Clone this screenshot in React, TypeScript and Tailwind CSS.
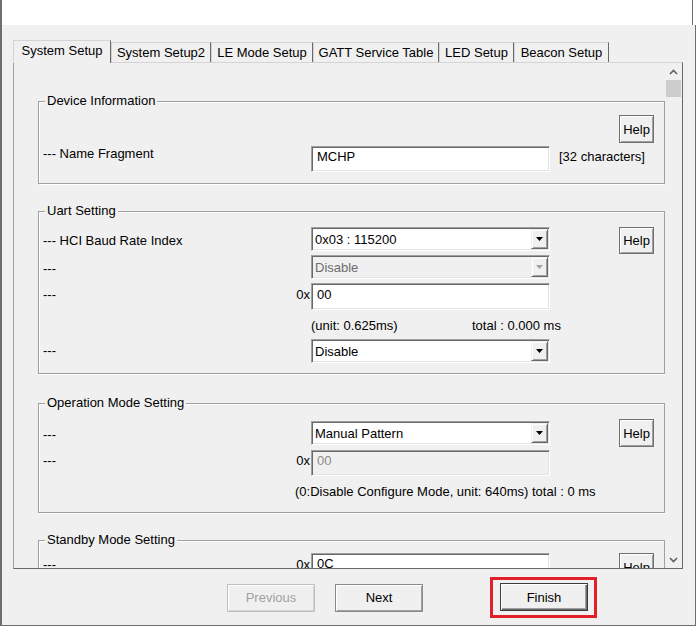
import React from 'react';

const sunkenWhite =
  "bg-white border border-t-[#a0a0a0] border-l-[#a0a0a0] border-r-white border-b-white shadow-[inset_1px_1px_0_#696969,inset_-1px_-1px_0_#e3e3e3]";
const sunkenGray =
  "bg-[#f0f0f0] border border-t-[#a0a0a0] border-l-[#a0a0a0] border-r-white border-b-white shadow-[inset_1px_1px_0_#696969,inset_-1px_-1px_0_#e3e3e3]";

function HelpBtn({ short }: { short?: boolean }) {
  return (
    <div
      className={`w-[35px] ${short ? 'h-[27px]' : 'h-[28px]'} shrink-0 flex items-center justify-center bg-[#f0f0f0] border border-[#707070] shadow-[inset_1px_1px_0_#ffffff,inset_-1px_-1px_0_#a0a0a0]`}
    >
      Help
    </div>
  );
}

function Arrow({ disabled }: { disabled?: boolean }) {
  return (
    <div className="w-[17px] h-[20px] mt-[1px] mr-[1px] shrink-0 flex items-center justify-center bg-[#f0f0f0] border border-t-[#f0f0f0] border-l-[#f0f0f0] border-r-[#696969] border-b-[#696969] shadow-[inset_1px_1px_0_#ffffff,inset_-1px_-1px_0_#a0a0a0]">
      <svg width="7" height="4" viewBox="0 0 7 4">
        <path d="M0 0H7L3.5 4Z" fill={disabled ? '#a0a0a0' : '#000000'} />
      </svg>
    </div>
  );
}

function Combo({ value, disabled }: { value: string; disabled?: boolean }) {
  return (
    <div className={`w-[239px] h-[24px] shrink-0 flex items-start ${disabled ? sunkenGray : sunkenWhite}`}>
      <div className={`flex-1 h-full flex items-center pl-[3px] ${disabled ? 'text-[#6d6d6d]' : 'text-black'}`}>{value}</div>
      <Arrow disabled={disabled} />
    </div>
  );
}

function TextBox({ value, disabled }: { value: string; disabled?: boolean }) {
  return (
    <div className={`w-[239px] h-[26px] shrink-0 pl-[5px] pt-[2px] ${disabled ? sunkenGray + ' text-[#8a8a8a]' : sunkenWhite}`}>
      {value}
    </div>
  );
}

function Group({ title, children }: { title: string; children: React.ReactNode }) {
  return (
    <div className="w-[627px] border border-[#a0a0a0] shadow-[inset_1px_1px_0_#ffffff,1px_1px_0_#ffffff]">
      <div className="-mt-[9px] ml-[6px] px-[2px] w-fit h-[16px] leading-[16px] bg-[#f0f0f0]">{title}</div>
      {children}
    </div>
  );
}

function Tab({ label, w, selected }: { label: string; w: string; selected?: boolean }) {
  return (
    <div
      className={`${w} shrink-0 text-center bg-[#f0f0f0] border-t border-l border-r border-t-[#d4d4d4] border-l-[#d4d4d4] border-r-[#696969] ${
        selected ? 'h-[23px] -mb-px relative z-10 pt-[2px]' : 'h-[20px] pt-[2px]'
      }`}
    >
      {label}
    </div>
  );
}

export default function App() {
  return (
    <div className="w-[697px] h-[626px] bg-white flex flex-col overflow-hidden font-['Liberation_Sans',Arial,sans-serif] text-[13px] leading-[15px] text-black">
      {/* top white strip */}
      <div className="h-[25px] shrink-0 bg-white border-l-2 border-[#6e6e6e] flex justify-end">
        <div className="w-px h-full bg-[#6e6e6e] mr-[4px]" />
      </div>

      {/* dialog body */}
      <div className="w-[696px] flex-1 bg-[#f0f0f0] border-l-2 border-r border-b border-[#6e6e6e] pt-[15px] pl-[11px]">
        {/* tabs */}
        <div className="flex items-end h-[22px]">
          <Tab label="System Setup" w="w-[98px]" selected />
          <Tab label="System Setup2" w="w-[100px]" />
          <Tab label="LE Mode Setup" w="w-[102px]" />
          <Tab label="GATT Service Table" w="w-[126px]" />
          <Tab label="LED Setup" w="w-[75px]" />
          <Tab label="Beacon Setup" w="w-[95px]" />
        </div>

        {/* panel */}
        <div className="w-[670px] h-[507px] flex border border-t-[#d4d4d4] border-l-[#a0a0a0] border-r-[#696969] border-b-[#696969]">
          <div className="w-[651px] h-full overflow-hidden pl-[24px] pt-[38px]">
            {/* Device Information */}
            <Group title="Device Information">
              <div className="mt-[6px] h-[28px] flex pl-[4px]">
                <div className="w-[576px]" />
                <HelpBtn />
              </div>
              <div className="mt-[3px] h-[26px] flex pl-[4px]">
                <div className="w-[268px] shrink-0">--- Name Fragment</div>
                <TextBox value="MCHP" />
                <div className="ml-[9px] pt-[3px]">[32 characters]</div>
              </div>
              <div className="h-[11px]" />
            </Group>

            {/* Uart Setting */}
            <div className="mt-[27px]">
              <Group title="Uart Setting">
                <div className="mt-[8px] h-[24px] flex pl-[4px]">
                  <div className="w-[268px] shrink-0 pt-[6px]">--- HCI Baud Rate Index</div>
                  <Combo value="0x03 : 115200" />
                  <div className="ml-[69px] h-[27px]">
                    <HelpBtn short />
                  </div>
                </div>
                <div className="mt-[4px] h-[24px] flex pl-[4px]">
                  <div className="w-[268px] shrink-0 pt-[6px]">---</div>
                  <Combo value="Disable" disabled />
                </div>
                <div className="mt-[4px] h-[27px] flex pl-[4px]">
                  <div className="w-[268px] shrink-0 pt-[4px] pr-[1px] flex justify-between">
                    <span>---</span>
                    <span>0x</span>
                  </div>
                  <div className="w-[239px] h-[27px] shrink-0 pl-[5px] pt-[3px] bg-white border border-t-[#a0a0a0] border-l-[#a0a0a0] border-r-white border-b-white shadow-[inset_1px_1px_0_#696969,inset_-1px_-1px_0_#e3e3e3]">
                    00
                  </div>
                </div>
                <div className="mt-[8px] h-[15px] flex pl-[272px]">
                  <div className="w-[161px]">(unit: 0.625ms)</div>
                  <div>total : 0.000 ms</div>
                </div>
                <div className="mt-[6px] h-[24px] flex pl-[4px]">
                  <div className="w-[268px] shrink-0 pt-[4px]">---</div>
                  <Combo value="Disable" />
                </div>
                <div className="h-[10px]" />
              </Group>
            </div>

            {/* Operation Mode Setting */}
            <div className="mt-[29px]">
              <Group title="Operation Mode Setting">
                <div className="mt-[10px] h-[24px] flex pl-[4px]">
                  <div className="w-[268px] shrink-0 pt-[6px]">---</div>
                  <Combo value="Manual Pattern" />
                  <div className="ml-[69px] -mt-[2px] h-[28px]">
                    <HelpBtn />
                  </div>
                </div>
                <div className="mt-[5px] h-[26px] flex pl-[4px]">
                  <div className="w-[268px] shrink-0 pt-[3px] pr-[1px] flex justify-between">
                    <span>---</span>
                    <span>0x</span>
                  </div>
                  <TextBox value="00" disabled />
                </div>
                <div className="mt-[8px] h-[15px] flex pl-[256px]">
                  <div>(0:Disable Configure Mode, unit: 640ms) total : 0 ms</div>
                </div>
                <div className="h-[13px]" />
              </Group>
            </div>

            {/* Standby Mode Setting */}
            <div className="mt-[27px]">
              <Group title="Standby Mode Setting">
                <div className="mt-[5px] h-[27px] flex pl-[4px]">
                  <div className="w-[268px] shrink-0 pt-[4px] pr-[1px] flex justify-between">
                    <span>---</span>
                    <span>0x</span>
                  </div>
                  <TextBox value="0C" />
                  <div className="ml-[69px]">
                    <HelpBtn />
                  </div>
                </div>
                <div className="h-[40px]" />
              </Group>
            </div>
          </div>

          {/* scrollbar */}
          <div className="w-[17px] h-full flex flex-col bg-[#f0f0f0]">
            <div className="h-[17px] flex items-center justify-center">
              <svg width="9" height="6" viewBox="0 0 9 6">
                <path d="M1 5L4.5 1.5L8 5" stroke="#606060" strokeWidth="1.6" fill="none" />
              </svg>
            </div>
            <div className="ml-px w-[15px] h-[17px] bg-[#cdcdcd]" />
            <div className="flex-1" />
            <div className="h-[17px] flex items-center justify-center">
              <svg width="9" height="6" viewBox="0 0 9 6">
                <path d="M1 1L4.5 4.5L8 1" stroke="#606060" strokeWidth="1.6" fill="none" />
              </svg>
            </div>
          </div>
        </div>

        {/* bottom buttons */}
        <div className="mt-[8px] flex items-center pl-[214px]">
          <div className="w-[88px] h-[28px] flex items-center justify-center text-[#a0a0a0] bg-[#f0f0f0] border border-[#bfbfbf] shadow-[inset_1px_1px_0_#ffffff,inset_-1px_-1px_0_#d4d4d4]">
            Previous
          </div>
          <div className="ml-[20px] w-[88px] h-[28px] flex items-center justify-center bg-[#f0f0f0] border border-[#8a8a8a] shadow-[inset_1px_1px_0_#ffffff,inset_-1px_-1px_0_#a0a0a0]">
            Next
          </div>
          <div className="ml-[67px] w-[107px] h-[41px] border-[3px] border-[#e3202a] pl-[7px] pt-[3px]">
            <div className="w-[88px] h-[28px] flex items-center justify-center bg-[#f0f0f0] border border-[#3c3c3c] shadow-[inset_1px_1px_0_#ffffff,inset_-1px_-1px_0_#696969,inset_-2px_-2px_0_#a0a0a0]">
              Finish
            </div>
          </div>
        </div>
      </div>
    </div>
  );
}
